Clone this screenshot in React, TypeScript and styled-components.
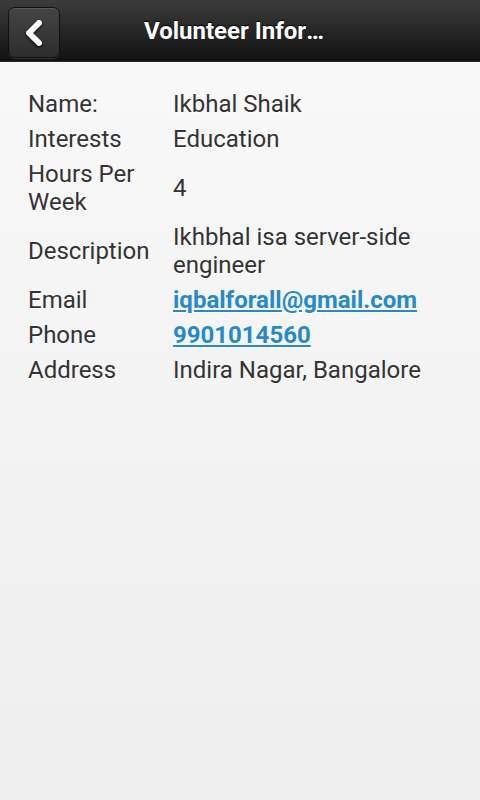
import React from "react";
import styled, { createGlobalStyle } from "styled-components";

const Global = createGlobalStyle`
  html, body { margin: 0; padding: 0; height: 100%; }
  body { font-family: Roboto, "Noto Sans", sans-serif; }
  #root { min-height: 100%; }
`;

const Page = styled.div`
  width: 480px;
  height: 800px;
  display: flex;
  flex-direction: column;
  background: linear-gradient(#f9f9f9, #eeeeee);
  overflow: hidden;
`;

const Header = styled.header`
  position: relative;
  height: 62px;
  flex: none;
  display: flex;
  align-items: center;
  background: linear-gradient(#3c3c3c, #111111);
  border-bottom: 1px solid #2a2a2a;
  box-sizing: border-box;
`;

const BackButton = styled.button`
  position: absolute;
  left: 8px;
  top: 7px;
  width: 52px;
  height: 51px;
  padding: 0;
  border-radius: 7px;
  border: 1px solid #0f0f0f;
  background: linear-gradient(#444444, #2d2d2d);
  box-shadow: inset 0 1px 0 rgba(255, 255, 255, 0.12), 0 1px 0 rgba(255, 255, 255, 0.15);
  display: flex;
  align-items: center;
  justify-content: center;
  box-sizing: border-box;
`;

const Title = styled.h1`
  margin: 0 30%;
  width: 40%;
  color: #fff;
  font-family: Roboto, sans-serif;
  font-weight: 700;
  font-size: 24px;
  line-height: 32px;
  text-align: center;
  white-space: nowrap;
  overflow: hidden;
  text-overflow: ellipsis;
  text-shadow: 0 -1px 1px #000;
`;

const Content = styled.main`
  padding: 24px 28px;
`;

const Grid = styled.div`
  display: grid;
  grid-template-columns: 145px 1fr;
  color: #333;
  font-size: 24px;
  line-height: 28px;
  text-shadow: 0 1px 0 #fff;
`;

const Cell = styled.div`
  padding: 3.5px 0;
  display: flex;
  align-items: center;
`;

const Link = styled.a`
  color: #2489ce;
  font-weight: 700;
  text-decoration: underline;
`;

const rows: [string, React.ReactNode][] = [
  ["Name:", "Ikbhal Shaik"],
  ["Interests", "Education"],
  ["Hours Per Week", "4"],
  ["Description", "Ikhbhal isa server-side engineer"],
  ["Email", <Link href="#">iqbalforall@gmail.com</Link>],
  ["Phone", <Link href="#">9901014560</Link>],
  ["Address", "Indira Nagar, Bangalore"],
];

export default function App() {
  return (
    <>
      <Global />
      <Page>
        <Header>
          <BackButton aria-label="Back">
            <svg width="24" height="26" viewBox="0 0 24 26" style={{ filter: "drop-shadow(0 1px 1px #000)" }}>
              <path d="M17 3 L7 13 L17 23" fill="none" stroke="#fff" strokeWidth="6" strokeLinecap="round" strokeLinejoin="round" />
            </svg>
          </BackButton>
          <Title>Volunteer Information</Title>
        </Header>
        <Content>
          <Grid>
            {rows.map(([k, v], i) => (
              <React.Fragment key={i}>
                <Cell>{k}</Cell>
                <Cell>{v}</Cell>
              </React.Fragment>
            ))}
          </Grid>
        </Content>
      </Page>
    </>
  );
}
